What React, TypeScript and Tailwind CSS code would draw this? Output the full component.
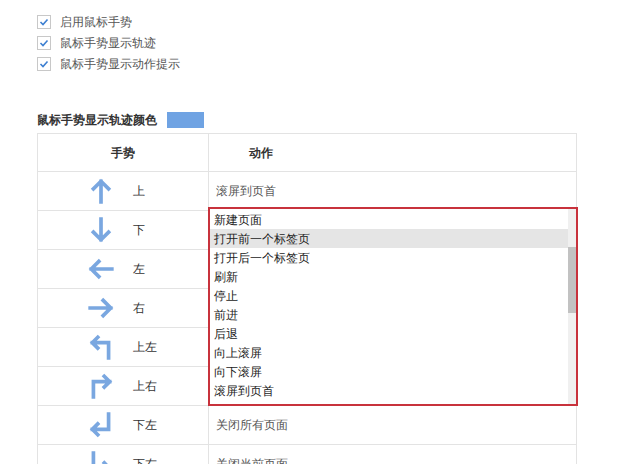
const font = "font-['Noto_Sans_CJK_SC',sans-serif]"
const blue = "#7aa7e0"

function Arrow({ kind }: { kind: string }) {
  const paths: Record<string, string> = {
    up: "M12 22 V3 M5 10 L12 3 L19 10",
    down: "M12 2 V21 M5 14 L12 21 L19 14",
    left: "M22 12 H3 M10 5 L3 12 L10 19",
    right: "M2 12 H21 M14 5 L21 12 L14 19",
    upleft: "M19 22 V8 H4 M9 3 L4 8 L9 13",
    upright: "M5 22 V8 H20 M15 3 L20 8 L15 13",
    downleft: "M19 2 V16 H4 M9 11 L4 16 L9 21",
    downright: "M5 2 V16 H20 M15 11 L20 16 L15 21",
  }
  return (
    <svg width="26" height="26" viewBox="0 0 24 24" fill="none" stroke={blue} strokeWidth="3.4" strokeLinecap="square">
      <path d={paths[kind]} />
    </svg>
  )
}

const rows = [
  ["up", "上", "滚屏到页首"],
  ["down", "下", ""],
  ["left", "左", ""],
  ["right", "右", ""],
  ["upleft", "上左", ""],
  ["upright", "上右", ""],
  ["downleft", "下左", "关闭所有页面"],
  ["downright", "下右", "关闭当前页面"],
]

const options = ["新建页面", "打开前一个标签页", "打开后一个标签页", "刷新", "停止", "前进", "后退", "向上滚屏", "向下滚屏", "滚屏到页首"]

export default function App() {
  return (
    <div className={`${font} w-[622px] h-[464px] overflow-hidden bg-white text-[12px] text-[#333] relative`}>
      <div className="pl-[37px] pt-[14px] flex flex-col gap-[5px]">
        {["启用鼠标手势", "鼠标手势显示轨迹", "鼠标手势显示动作提示"].map((t) => (
          <label key={t} className="flex items-center gap-[9px] h-[16px]">
            <span className="w-[14px] h-[14px] border border-[#c8c8c8] bg-white flex items-center justify-center">
              <svg width="10" height="10" viewBox="0 0 10 10" fill="none" stroke="#3d7fd1" strokeWidth="1.6">
                <path d="M1.5 5 L4 7.5 L8.5 2.5" />
              </svg>
            </span>
            <span className="text-[#555]">{t}</span>
          </label>
        ))}
      </div>
      <div className="pl-[37px] mt-[39px] flex items-center gap-[10px] h-[17px] font-bold">
        <span>鼠标手势显示轨迹颜色</span>
        <span className="w-[37px] h-[16px] bg-[#6fa3e3]"></span>
      </div>
      <div className="ml-[37px] mt-[5px] w-[540px] border-l border-r border-t border-[#e3e3e3]">
        <div className="flex h-[38px] border-b border-[#e3e3e3] font-bold">
          <div className="w-[171px] border-r border-[#e3e3e3] flex items-center justify-center">手势</div>
          <div className="flex-1 flex items-center pl-[40px]">动作</div>
        </div>
        {rows.map(([k, g, a]) => (
          <div key={g} className="flex h-[39px] border-b border-[#e3e3e3]">
            <div className="w-[171px] border-r border-[#e3e3e3] flex items-center pl-[50px] gap-[19px]">
              <Arrow kind={k} />
              <span>{g}</span>
            </div>
            <div className="flex-1 flex items-center pl-[7px] text-[#555]">{a}</div>
          </div>
        ))}
      </div>
      <div className="absolute left-[208px] top-[207px] w-[370px] h-[199px] border-2 border-[#c8323c] bg-white">
        <div className="flex h-full">
          <div className="flex-1 pt-[1px]">
            {options.map((o, i) => (
              <div key={o} className={`h-[19px] leading-[19px] pl-[4px] text-[#222] ${i === 1 ? "bg-[#e5e5e5]" : ""}`}>{o}</div>
            ))}
          </div>
          <div className="w-[8px] bg-[#f0f0f0] pt-[38px]">
            <div className="h-[66px] bg-[#c2c2c2]"></div>
          </div>
        </div>
      </div>
    </div>
  )
}
